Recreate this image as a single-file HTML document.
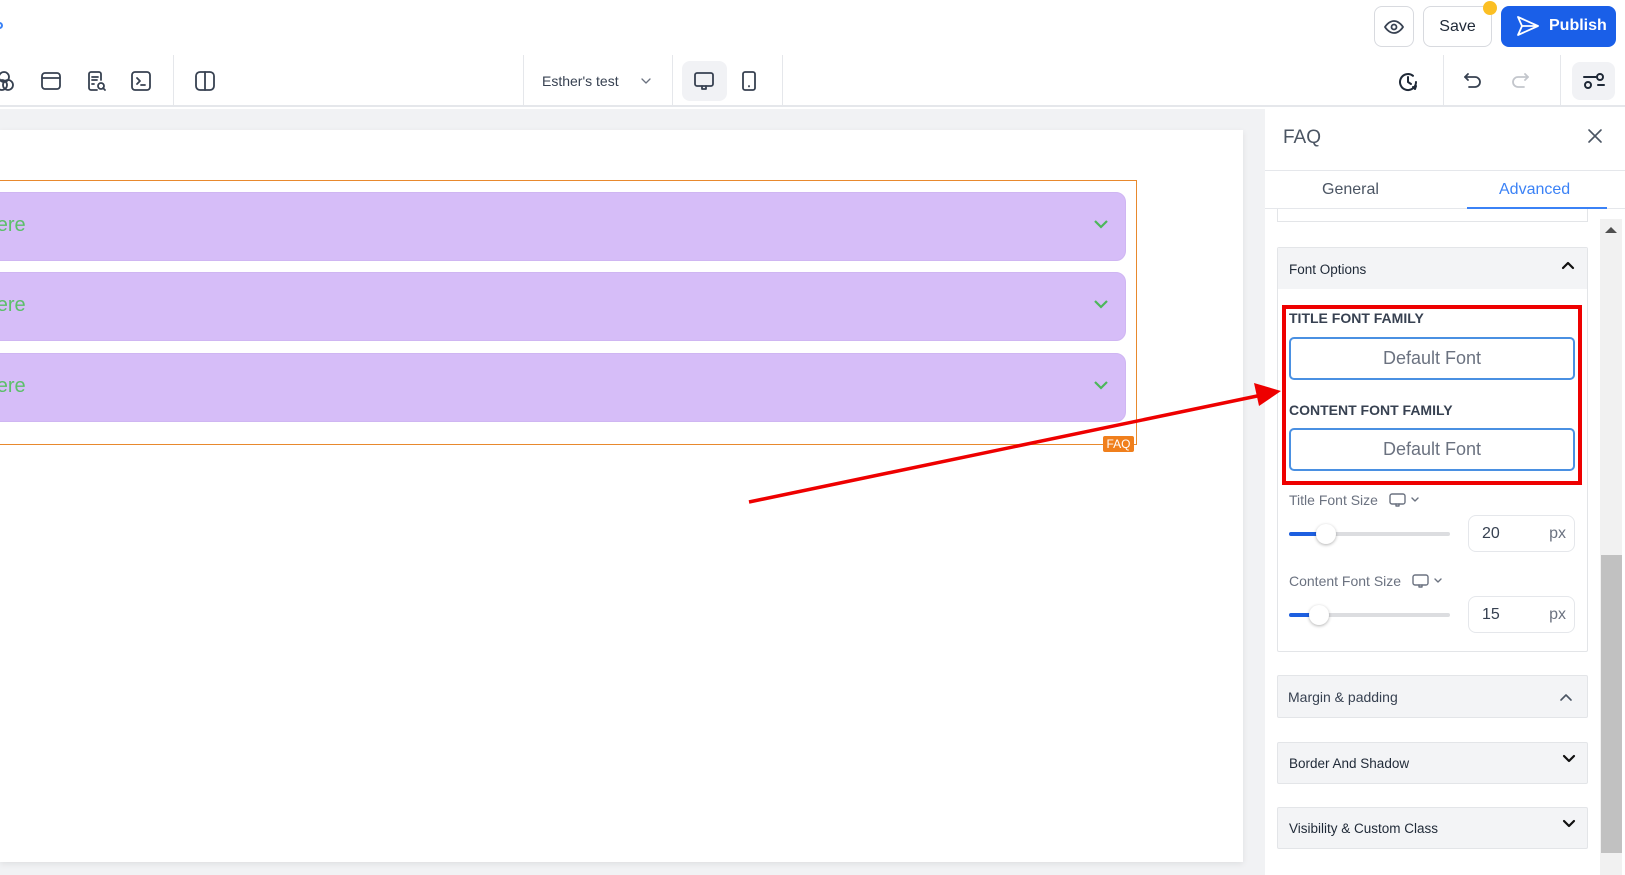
<!DOCTYPE html>
<html><head><meta charset="utf-8"><style>
*{box-sizing:border-box;margin:0;padding:0}
body{width:1625px;height:875px;overflow:hidden;position:relative;background:#fff;font-family:"Liberation Sans",sans-serif;color:#1f2937}
.a{position:absolute}
.ic{position:absolute;stroke:#374151;fill:none;stroke-width:1.8;stroke-linecap:round;stroke-linejoin:round}
.vd{position:absolute;top:55px;width:1px;height:52px;background:#e5e7eb}
.item{position:absolute;left:-20px;width:1146px;height:69px;background:#d6bdf8;border-radius:10px;border:1px solid #cfb6f2;overflow:hidden}
.item span{position:absolute;left:-81px;top:21px;font-size:20px;color:#5cbf6a;white-space:nowrap}
.item svg{position:absolute;right:16px;top:26px}
.sec{position:absolute;left:1277px;width:311px;border:1px solid #e3e5e8;background:#f3f4f6;font-size:14px;color:#1f2937;border-radius:2px}
.lbl{font-size:14px;font-weight:bold;color:#374151;position:absolute;left:1289px}
.inp{position:absolute;left:1289px;width:286px;height:43px;border:2px solid #4a90e2;border-radius:5px;text-align:center;font-size:18px;color:#6b7280;line-height:39px}
.g{font-size:14px;color:#6b7280;position:absolute;left:1289px}
.trk{position:absolute;left:1289px;width:161px;height:4px;background:#dcdde0;border-radius:2px}
.knob{position:absolute;width:20px;height:20px;border-radius:50%;background:#fff;box-shadow:0 1px 3px rgba(0,0,0,.3)}
.num{position:absolute;left:1468px;width:107px;height:37px;border:1px solid #e5e7eb;border-radius:8px;font-size:16px;color:#374151}
</style></head><body>
<div class="a" style="left:0;top:0;width:1625px;height:107px;background:#fff;border-bottom:2px solid #e5e7eb"></div>
<div class="a" style="left:-4px;top:22px;width:7px;height:7px;border-radius:50%;border:2px solid #3b82f6"></div>
<svg class="ic" style="left:-4px;top:70px" width="22" height="22" viewBox="0 0 22 22"><circle cx="8" cy="7" r="5"/><circle cx="6" cy="15" r="5"/><circle cx="12" cy="15" r="5"/></svg>
<svg class="ic" style="left:40px;top:70px" width="22" height="22" viewBox="0 0 22 22"><rect x="2" y="3" width="18" height="16" rx="3"/><path d="M2 8h18"/></svg>
<svg class="ic" style="left:86px;top:70px" width="22" height="22" viewBox="0 0 22 22"><path d="M11 20H5a2 2 0 0 1-2-2V4a2 2 0 0 1 2-2h8a2 2 0 0 1 2 2v6"/><path d="M6 7h6M6 10h5M6 14h2"/><circle cx="15" cy="16" r="3"/><path d="M17 18l2 2"/></svg>
<svg class="ic" style="left:130px;top:70px" width="22" height="22" viewBox="0 0 22 22"><rect x="2" y="2" width="18" height="18" rx="3"/><path d="M7 8l3 3-3 3M11 15h4"/></svg>
<div class="vd" style="left:173px"></div>
<svg class="ic" style="left:194px;top:70px" width="22" height="22" viewBox="0 0 22 22"><rect x="2" y="2" width="18" height="18" rx="4"/><path d="M11 2v18"/></svg>
<div class="vd" style="left:523px"></div>
<div class="a" style="left:542px;top:73px;font-size:14px;color:#374151">Esther's test</div>
<svg class="ic" style="left:641px;top:77px;stroke:#6b7280;stroke-width:1.3" width="10" height="8" viewBox="0 0 10 8"><path d="M1 2l4 4 4-4"/></svg>
<div class="vd" style="left:672px"></div>
<div class="a" style="left:682px;top:61px;width:45px;height:40px;background:#f1f2f5;border-radius:8px"></div>
<svg class="ic" style="left:693px;top:70px" width="22" height="22" viewBox="0 0 22 22"><rect x="2" y="3" width="18" height="13" rx="2"/><path d="M9 16v3h4v-3"/></svg>
<svg class="ic" style="left:738px;top:70px" width="22" height="22" viewBox="0 0 22 22"><rect x="5" y="2" width="12" height="18" rx="2"/><path d="M11 16v.5"/></svg>
<div class="vd" style="left:782px"></div>
<div class="a" style="left:1374px;top:6px;width:40px;height:41px;border:1px solid #d8dadf;border-radius:8px"></div>
<svg class="ic" style="left:1383px;top:16px" width="22" height="22" viewBox="0 0 22 22"><path d="M2 11s3.5-6 9-6 9 6 9 6-3.5 6-9 6-9-6-9-6z"/><circle cx="11" cy="11" r="2.5"/></svg>
<div class="a" style="left:1423px;top:6px;width:69px;height:41px;border:1px solid #d8dadf;border-radius:8px;font-size:16px;line-height:39px;text-align:center;color:#1f2937">Save</div>
<div class="a" style="left:1483px;top:1px;width:14px;height:14px;border-radius:50%;background:#fbbf24"></div>
<div class="a" style="left:1501px;top:6px;width:115px;height:41px;background:#1a5fe8;border-radius:8px;color:#fff;font-weight:bold;font-size:16px;line-height:40px;padding-left:48px">Publish</div>
<svg class="a" style="left:1516px;top:15px;fill:none;stroke:#fff;stroke-width:1.8;stroke-linejoin:round" width="24" height="22" viewBox="0 0 24 22"><path d="M2 2l20 9-20 9 4-9z M6 11h16"/></svg>
<svg class="ic" style="left:1396px;top:70px;stroke:#1f2937;stroke-width:2" width="24" height="24" viewBox="0 0 24 24"><path d="M20 12a8 8 0 1 1-3-6.2"/><path d="M12 7v5l3 2"/><path d="M20 16l-1 3-2-2"/></svg>
<div class="vd" style="left:1443px"></div>
<svg class="ic" style="left:1462px;top:70px;stroke:#374151" width="22" height="22" viewBox="0 0 22 22"><path d="M6 4L3 7l3 3"/><path d="M3 7h10a5 5 0 0 1 0 10H7"/></svg>
<svg class="ic" style="left:1509px;top:70px;stroke:#c3c6cc" width="22" height="22" viewBox="0 0 22 22"><path d="M16 4l3 3-3 3"/><path d="M19 7H9a5 5 0 0 0 0 10h6"/></svg>
<div class="vd" style="left:1560px"></div>
<div class="a" style="left:1572px;top:62px;width:43px;height:38px;background:#f1f2f5;border-radius:8px"></div>
<svg class="ic" style="left:1582px;top:70px;stroke:#1f2937;stroke-width:2" width="24" height="22" viewBox="0 0 24 22"><path d="M2 7h12M16 15h6"/><circle cx="18" cy="7" r="3"/><circle cx="6" cy="15" r="3"/></svg>
<div class="a" style="left:0;top:109px;width:1265px;height:766px;background:#f1f2f4"></div>
<div class="a" style="left:0;top:130px;width:1243px;height:732px;background:#fff;box-shadow:0 2px 6px rgba(0,0,0,.08)"></div>
<div class="a" style="left:-2px;top:180px;width:1139px;height:265px;border:1px solid #e8892d"></div>
<div class="item" style="top:192px"><span>Question here</span><svg width="16" height="10" viewBox="0 0 16 10" fill="none" stroke="#4cb75a" stroke-width="2.2"><path d="M2 2l6 6 6-6"/></svg></div>
<div class="item" style="top:272px"><span>Question here</span><svg width="16" height="10" viewBox="0 0 16 10" fill="none" stroke="#4cb75a" stroke-width="2.2"><path d="M2 2l6 6 6-6"/></svg></div>
<div class="item" style="top:353px"><span>Question here</span><svg width="16" height="10" viewBox="0 0 16 10" fill="none" stroke="#4cb75a" stroke-width="2.2"><path d="M2 2l6 6 6-6"/></svg></div>
<div class="a" style="left:1103px;top:436px;width:31px;height:16px;background:#f07f1c;color:#fff;font-size:12px;line-height:16px;text-align:center;border-radius:2px">FAQ</div>
<div class="a" style="left:1265px;top:109px;width:360px;height:766px;background:#fff"></div>
<div class="a" style="left:1283px;top:127px;font-size:19px;color:#4b5563">FAQ</div>
<svg class="ic" style="left:1587px;top:128px;stroke:#4b5563;stroke-width:1.6" width="16" height="16" viewBox="0 0 16 16"><path d="M2 2l12 12M14 2L2 14"/></svg>
<div class="a" style="left:1265px;top:170px;width:360px;height:1px;background:#e5e7eb"></div>
<div class="a" style="left:1322px;top:181px;font-size:16px;color:#4b5563">General</div>
<div class="a" style="left:1499px;top:181px;font-size:16px;color:#3b82f6">Advanced</div>
<div class="a" style="left:1265px;top:208px;width:360px;height:1px;background:#e5e7eb"></div>
<div class="a" style="left:1467px;top:207px;width:140px;height:2px;background:#3b82f6"></div>
<div class="a" style="left:1277px;top:209px;width:311px;height:13px;border:1px solid #e3e5e8;border-top:none;background:#fff"></div>
<div class="a" style="left:1600px;top:219px;width:22px;height:656px;background:#f1f1f1"></div>
<div class="a" style="left:1605px;top:227px;width:0;height:0;border-left:6px solid transparent;border-right:6px solid transparent;border-bottom:6px solid #505050"></div>
<div class="a" style="left:1601px;top:555px;width:21px;height:298px;background:#c1c1c1"></div>
<div class="sec" style="top:247px;height:405px;background:#fff"><div style="background:#f3f4f6;height:41px;padding:14px 11px;font-size:13.5px">Font Options</div></div>
<svg class="ic" style="left:1561px;top:261px;stroke:#111;stroke-width:2.2" width="14" height="10" viewBox="0 0 14 10"><path d="M2 7l5-5 5 5"/></svg>
<div class="a" style="left:1282px;top:305px;width:300px;height:180px;border:4px solid #e00"></div>
<div class="lbl" style="top:310px">TITLE FONT FAMILY</div>
<div class="inp" style="top:337px">Default Font</div>
<div class="lbl" style="top:402px">CONTENT FONT FAMILY</div>
<div class="inp" style="top:428px">Default Font</div>
<div class="g" style="top:492px">Title Font Size</div>
<svg class="ic" style="left:1389px;top:492px;stroke:#6b7280;stroke-width:1.4" width="32" height="16" viewBox="0 0 32 16"><rect x="1" y="2" width="15" height="10" rx="2"/><path d="M7 12v2h3v-2M23 6l3 3 3-3"/></svg>
<div class="trk" style="top:532px"></div>
<div class="a" style="left:1289px;top:532px;width:36px;height:4px;background:#1d5fe0;border-radius:2px"></div>
<div class="knob" style="left:1316px;top:524px"></div>
<div class="num" style="top:515px"><span class="a" style="left:13px;top:9px">20</span><span class="a" style="right:8px;top:9px;color:#6b7280">px</span></div>
<div class="g" style="top:573px">Content Font Size</div>
<svg class="ic" style="left:1412px;top:573px;stroke:#6b7280;stroke-width:1.4" width="32" height="16" viewBox="0 0 32 16"><rect x="1" y="2" width="15" height="10" rx="2"/><path d="M7 12v2h3v-2M23 6l3 3 3-3"/></svg>
<div class="trk" style="top:613px"></div>
<div class="a" style="left:1289px;top:613px;width:29px;height:4px;background:#1d5fe0;border-radius:2px"></div>
<div class="knob" style="left:1309px;top:605px"></div>
<div class="num" style="top:596px"><span class="a" style="left:13px;top:9px">15</span><span class="a" style="right:8px;top:9px;color:#6b7280">px</span></div>
<div class="sec" style="top:675px;height:43px;padding:13px 10px;color:#374151">Margin &amp; padding</div>
<svg class="ic" style="left:1559px;top:692px;stroke:#4b5563;stroke-width:1.6" width="14" height="10" viewBox="0 0 14 10"><path d="M2 8l5-5 5 5"/></svg>
<div class="sec" style="top:742px;height:42px;padding:13px 11px;font-size:13.5px">Border And Shadow</div>
<svg class="ic" style="left:1562px;top:754px;stroke:#111;stroke-width:2.2" width="14" height="10" viewBox="0 0 14 10"><path d="M2 2l5 5 5-5"/></svg>
<div class="sec" style="top:807px;height:42px;padding:13px 11px;font-size:13.5px">Visibility &amp; Custom Class</div>
<svg class="ic" style="left:1562px;top:819px;stroke:#111;stroke-width:2.2" width="14" height="10" viewBox="0 0 14 10"><path d="M2 2l5 5 5-5"/></svg>
<svg class="a" style="left:0;top:0" width="1625" height="875"><line x1="749" y1="502" x2="1262" y2="395" stroke="#e00" stroke-width="3.5"/><polygon points="1281,391 1254,383 1259,406" fill="#e00"/></svg>
</body></html>
